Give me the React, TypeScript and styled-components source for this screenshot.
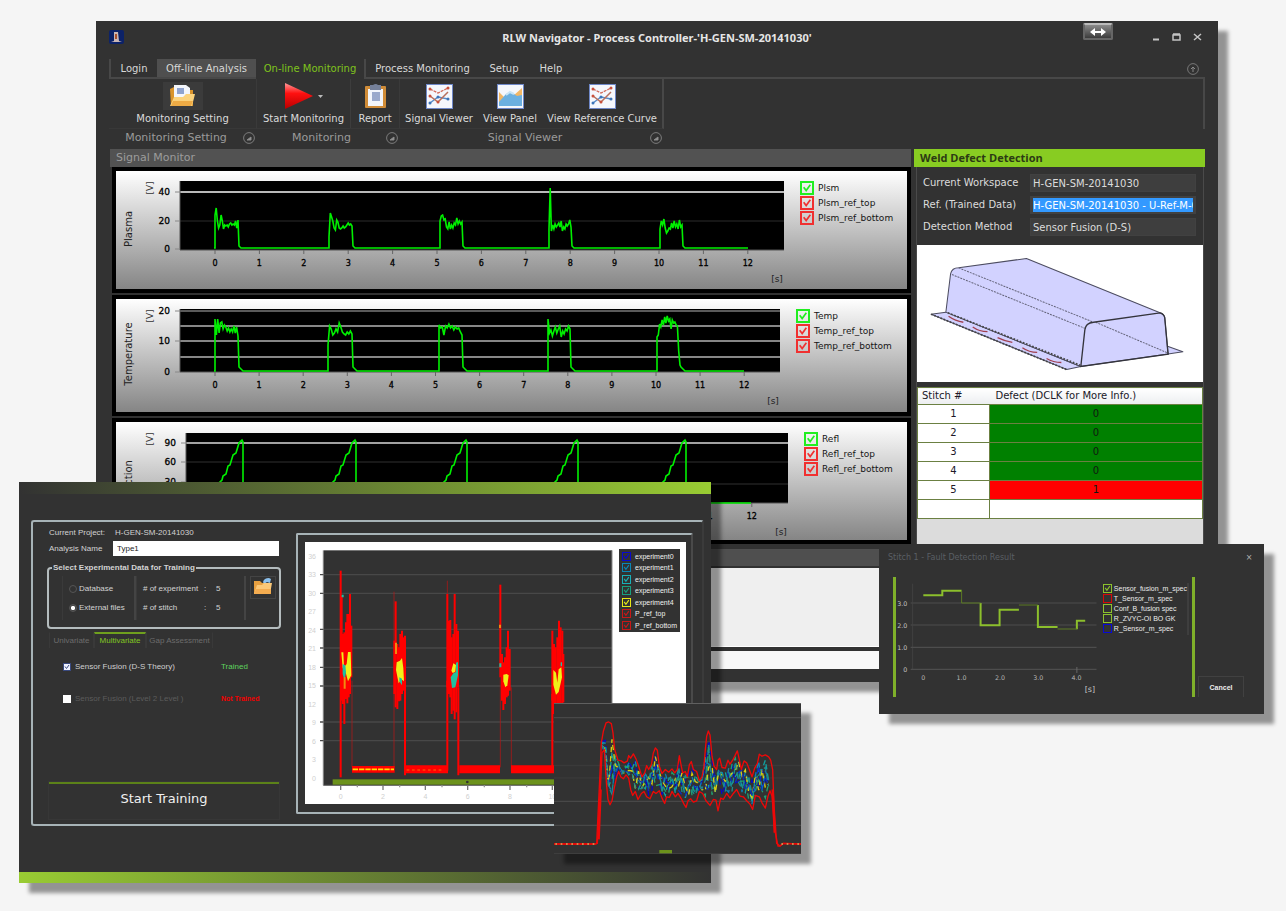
import React from "react";
import styled, { createGlobalStyle, css } from "styled-components";

const GlobalStyle = createGlobalStyle`
  *, *::before, *::after { box-sizing: border-box; }
  body {
    margin: 0;
    background: #f5f5f5;
    font-family: "DejaVu Sans", Verdana, sans-serif;
    font-size: 10px;
    line-height: 12px;
    color: #dedede;
  }
  button, input { font: inherit; color: inherit; }
`;

const dark = "#323232";
const line = "#484848";
const lime = "#88cc22";

/* ---------- shell ---------- */

const Desktop = styled.main`
  position: relative;
  min-height: 100vh;
  padding: 21px 68px 28px 96px;
  overflow: hidden;
`;

const windowChrome = css`
  background: ${dark};
  box-shadow: 10px 10px 4px rgba(0, 0, 0, 0.4);
`;

const MainWindow = styled.section`
  ${windowChrome}
  display: flex;
  flex-direction: column;
  padding: 0 13px 13px 13px;
`;

const FloatingWindow = styled.section<{ $left: number; $top: number; $width: number }>`
  ${windowChrome}
  position: absolute;
  left: ${(p) => p.$left}px;
  top: ${(p) => p.$top}px;
  width: ${(p) => p.$width}px;
`;

/* ---------- title bar ---------- */

const TitleBar = styled.header`
  display: grid;
  grid-template-columns: 1fr auto 1fr;
  height: 38px;
`;

const AppIcon = styled.svg`
  width: 15px;
  height: 14px;
  margin-top: 9px;
`;

const Title = styled.h1`
  margin: 11px 0 0;
  font: bold 11px/12px "Noto Sans", sans-serif;
  color: #e6e6e6;
`;

const TitleActions = styled.div`
  display: flex;
  justify-content: flex-end;
  gap: 8px;
  padding-right: 1px;
`;

const DockButton = styled.button`
  width: 30px;
  height: 17px;
  margin: 2px 28px 0 0;
  padding: 0;
  border: 2px solid #666;
  border-top-color: #bbb;
  border-radius: 2px;
  background: linear-gradient(#8a8a8a, #3c3c3c);
  svg { display: block; width: 26px; height: 12px; }
`;

const WindowButton = styled.button`
  width: 13px;
  height: 13px;
  margin-top: 9px;
  padding: 0;
  border: 0;
  background: none;
  color: #c4c4c4;
  svg { display: block; width: 13px; height: 13px; }
`;

/* ---------- ribbon ---------- */

const TabStrip = styled.nav`
  display: flex;
  height: 20px;
`;

const Tab = styled.button<{ $width: number; $look?: "active" | "hover" | "first" | "edge" }>`
  width: ${(p) => p.$width}px;
  padding: 2px 0 0;
  border: 0 solid ${line};
  border-bottom: 2px solid ${(p) => (p.$look === "active" ? "transparent" : line)};
  border-left-width: ${(p) => (p.$look === "first" || p.$look === "edge" ? 2 : 0)}px;
  background: ${(p) => (p.$look === "hover" ? "#4f4f4f" : "none")};
  color: ${(p) => (p.$look === "active" ? "#7fc31c" : "#d8d8d8")};
  white-space: nowrap;
`;

const TabFiller = styled.div`
  flex: 1;
  display: flex;
  justify-content: flex-end;
  padding: 4px 6px 0 0;
  border-bottom: 2px solid ${line};
`;

const RoundGlyph = styled.svg`
  width: 12px;
  height: 12px;
  flex: none;
`;

const Ribbon = styled.div`
  display: flex;
  height: 70px;
`;

const RibbonGroup = styled.section<{ $width: number }>`
  width: ${(p) => p.$width}px;
  display: flex;
  flex-direction: column;
`;

const RibbonRest = styled.div`
  flex: 1;
  height: 50px;
  border-right: 2px solid ${line};
`;

const Tools = styled.div<{ $edge?: "thin" | "strong" }>`
  display: flex;
  justify-content: center;
  height: 50px;
  border-right: ${(p) => (p.$edge === "strong" ? `2px solid ${line}` : "1px solid #3a3a3a")};
  border-bottom: 1px solid #383838;
`;

const Tool = styled.button<{ $width: number; $divided?: boolean }>`
  width: ${(p) => p.$width}px;
  display: flex;
  flex-direction: column;
  align-items: center;
  gap: 3px;
  padding: 3px 0 0;
  border: 0;
  border-right: ${(p) => (p.$divided ? "1px solid #3d3d3d" : "0")};
  background: none;
  color: #dadada;
  white-space: nowrap;
`;

const ToolIcon = styled.span<{ $lit?: boolean }>`
  display: flex;
  justify-content: center;
  align-items: center;
  min-width: 40px;
  height: 28px;
  background: ${(p) => (p.$lit ? "#3b3b3b" : "none")};
`;

const GroupCaption = styled.div`
  display: flex;
  align-items: center;
  height: 18px;
  padding-right: 2px;
  font-size: 11px;
  color: #9a9a9a;
  span { flex: 1; text-align: center; }
`;

/* ---------- workspace ---------- */

const Workspace = styled.div`
  display: flex;
  gap: 3px;
  padding-left: 1px;
`;

const MonitorColumn = styled.section`
  flex: 1;
  min-width: 0;
`;

const PanelHeader = styled.h2<{ $lime?: boolean }>`
  height: 18px;
  margin: 0;
  padding-left: 6px;
  background: ${(p) => (p.$lime ? lime : "#525252")};
  color: ${(p) => (p.$lime ? "#2c3a14" : "#9c9c9c")};
  font: ${(p) => (p.$lime ? 'bold 11px/18px "Open Sans"' : '11px/18px "DejaVu Sans"')}, sans-serif;
`;

const ChartStack = styled.div`
  display: flex;
  flex-direction: column;
  gap: 2px;
  padding: 0 0 0 2px;
`;

const ChartCard = styled.article<{ $height: number }>`
  display: flex;
  height: ${(p) => p.$height}px;
  border: 4px solid #000;
  background: linear-gradient(#ffffff, #f0f0f0 12%, #858585);
`;

const ChartSvg = styled.svg`
  flex: 1;
  min-width: 0;
  height: 100%;
`;

const Legend = styled.div<{ $width: number }>`
  width: ${(p) => p.$width}px;
  padding-top: 9px;
`;

const LegendItem = styled.label`
  display: flex;
  align-items: center;
  gap: 4px;
  height: 15px;
  font-size: 9px;
  color: #161616;
`;

const tick = (color: string) =>
  `url("data:image/svg+xml,%3Csvg xmlns='http://www.w3.org/2000/svg' viewBox='0 0 12 12'%3E%3Cpath d='M2 5l3 4L10 2' fill='none' stroke='${encodeURIComponent(
    color
  )}' stroke-width='2'/%3E%3C/svg%3E")`;

const Check = styled.input<{ $color: string; $size: number; $fill?: string }>`
  appearance: none;
  flex: none;
  width: ${(p) => p.$size}px;
  height: ${(p) => p.$size}px;
  margin: 0;
  border: ${(p) => (p.$size > 10 ? 2 : 1)}px solid ${(p) => p.$color};
  background-color: ${(p) => p.$fill ?? "transparent"};
  &:checked { background-image: ${(p) => tick(p.$color)}; }
`;

const LogHeader = styled.div`
  height: 17px;
  margin-top: 5px;
  background: #4f4f4f;
`;

const LogArea = styled.div`
  height: 79px;
  margin-top: 2px;
  background: #efefef;
  border-bottom: 1px solid #fff;
`;

const StatusStrip = styled.div`
  height: 18px;
  margin-top: 4px;
  background: #f8f8f8;
`;

/* ---------- detection panel ---------- */

const DetectionColumn = styled.aside`
  width: 291px;
  display: flex;
  flex-direction: column;
`;

const DetectionBody = styled.div`
  flex: 1;
  display: flex;
  flex-direction: column;
  margin: 0 1px 0 2px;
  border: 1px solid #4a4a4a;
  border-top: 0;
`;

const Fields = styled.div`
  display: grid;
  gap: 4px;
  padding: 7px 7px 9px 6px;
`;

const Field = styled.label`
  display: flex;
  align-items: center;
  height: 18px;
  color: #dcdcdc;
  span { width: 107px; }
`;

const FieldInput = styled.input<{ $selected?: boolean }>`
  flex: 1;
  min-width: 0;
  height: 18px;
  border: 1px solid #414141;
  border-width: ${(p) => (p.$selected ? "2px 3px" : "1px")};
  padding: ${(p) => (p.$selected ? "0" : "0 2px")};
  background: ${(p) => (p.$selected ? "#3399ff" : "#3e3e3e")};
  color: ${(p) => (p.$selected ? "#fff" : "#dcdcdc")};
`;

const PartView = styled.svg`
  display: block;
  width: 100%;
  height: 137px;
  background: #fff;
`;

const DefectTable = styled.table`
  width: 100%;
  margin-top: 5px;
  border-collapse: collapse;
  table-layout: fixed;
  border: 1px solid #6b8042;
  background: #fff;
  color: #201828;
  th {
    height: 17px;
    padding: 0 6px;
    text-align: left;
    font-weight: normal;
    background: linear-gradient(#fff, #eceef0);
  }
  th:first-child { width: 72px; padding-left: 4px; }
  td {
    height: 19px;
    padding: 0;
    text-align: center;
    border: 1px solid #6b8042;
  }
`;

const DefectCell = styled.td<{ $state: "ok" | "bad" | "none" }>`
  background: ${(p) => ({ ok: "#008000", bad: "#ff0000", none: "#fff" })[p.$state]};
  color: #101810;
`;

const TableRest = styled.div`
  flex: 1;
  background: #dcdcdc;
`;

/* ---------- training window ---------- */

const Band = styled.div<{ $flip?: boolean }>`
  height: ${(p) => (p.$flip ? 11 : 12)}px;
  background: linear-gradient(${(p) => (p.$flip ? "270deg" : "90deg")}, ${dark}, #99cc33);
`;

const TrainingFrame = styled.div`
  display: flex;
  gap: 17px;
  height: 306px;
  margin: 26px 7px 46px 12px;
  padding: 3px 10px 5px 14px;
  border: 2px solid #a7b3b7;
  border-right-color: #3b3b3b;
  border-radius: 3px;
  font: 8px/10px "Liberation Sans", Arial, sans-serif;
  color: #d2d2d2;
`;

const TrainingForm = styled.form`
  display: flex;
  flex-direction: column;
  width: 232px;
`;

const FormRow = styled.label`
  display: flex;
  align-items: center;
  height: 15px;
  margin-bottom: 1px;
  padding-left: 2px;
  span { width: 64px; }
  output { padding-left: 2px; }
`;

const NameInput = styled.input`
  flex: 1;
  min-width: 0;
  height: 15px;
  padding: 0 4px;
  border: 0;
  background: #fff;
  color: #222;
`;

const DataSet = styled.fieldset`
  display: flex;
  height: 66px;
  margin: 6px 0 0;
  padding: 3px 3px 5px 13px;
  border: 2px solid #b4bcbe;
  border-radius: 4px;
  legend { padding: 0 1px; margin-left: -10px; font-weight: bold; }
`;

const DataColumn = styled.div<{ $width: number }>`
  width: ${(p) => p.$width}px;
  height: 44px;
  display: flex;
  flex-direction: column;
  justify-content: center;
  gap: 9px;
  padding-left: 6px;
  border: 1px solid #3a3a3a;
  border-width: 0 2px 0 1px;
  border-right-color: #444;
`;

const DataLine = styled.div`
  display: grid;
  grid-template-columns: 61px 12px 10px;
`;

const Radio = styled.label`
  display: flex;
  align-items: center;
  gap: 2px;
  white-space: nowrap;
  input {
    appearance: none;
    width: 8px;
    height: 8px;
    margin: 0;
    border: 1px solid #555;
    border-radius: 50%;
  }
  input:checked { background: radial-gradient(#fff 45%, #444 55%); }
`;

const OpenButton = styled.button`
  width: 26px;
  height: 23px;
  margin-left: 4px;
  padding: 0;
  border: 1px solid #444;
  background: ${dark};
`;

const MethodTabs = styled.div`
  display: flex;
  height: 16px;
  margin-top: 3px;
  padding-left: 2px;
`;

const MethodTab = styled.button<{ $on?: boolean; $width: number }>`
  width: ${(p) => p.$width}px;
  padding: 0;
  border: 1px solid #393939;
  border-top: ${(p) => (p.$on ? "2px solid #6fa01e" : "1px solid transparent")};
  border-bottom: 0;
  background: none;
  color: ${(p) => (p.$on ? "#83c722" : "#6c6c6c")};
`;

const Methods = styled.div`
  flex: 1;
  padding: 14px 0 0 16px;
`;

const Method = styled.div<{ $off?: boolean }>`
  display: flex;
  justify-content: space-between;
  height: 32px;
  padding-right: 22px;
  label {
    display: flex;
    align-items: center;
    gap: 4px;
    height: 10px;
    color: ${(p) => (p.$off ? "#5c5c5c" : "#cfcfcf")};
  }
`;

const Status = styled.strong<{ $ok?: boolean }>`
  width: 36px;
  font-weight: ${(p) => (p.$ok ? "normal" : "bold")};
  font-size: ${(p) => (p.$ok ? 8 : 7)}px;
  white-space: nowrap;
  color: ${(p) => (p.$ok ? "#5fd45f" : "#f00000")};
`;

const StartButton = styled.button`
  height: 37px;
  margin: 0 0 0 2px;
  padding: 0 0 5px;
  border: 0;
  border-top: 2px solid #5c8219;
  outline: 1px solid #373737;
  background: none;
  color: #f0f0f0;
  font: 13px/16px "DejaVu Sans", sans-serif;
`;

const PlotFrame = styled.div`
  flex: 1;
  height: 281px;
  margin-top: 8px;
  padding: 7px 5px 7px 7px;
  border: 2px solid #a7b3b7;
  border-right-color: #4a4a4a;
  border-radius: 2px;
`;

const PlotSheet = styled.div`
  display: flex;
  gap: 4px;
  height: 262px;
  background: #fff;
`;

const PlotSvg = styled.svg`
  flex: 1;
  min-width: 0;
  height: 262px;
`;

const SampleLegend = styled.div`
  width: 61px;
  height: 83px;
  margin: 7px 6px 0 0;
  padding: 1px 3px;
  background: ${dark};
  font: 7px/9px "Liberation Sans", Arial, sans-serif;
  color: #f0f0f0;
  label {
    display: flex;
    align-items: center;
    gap: 4px;
    height: 12px;
    white-space: nowrap;
  }
  label:nth-child(2n) { height: 11px; }
`;

/* ---------- result window ---------- */

const ResultHeader = styled.header`
  display: flex;
  justify-content: space-between;
  height: 33px;
  padding: 9px 11px 0 9px;
  font-size: 8px;
  line-height: 10px;
  color: #5a5f64;
`;

const CloseButton = styled.button`
  width: 8px;
  height: 10px;
  padding: 0;
  border: 0;
  background: none;
  color: #b5b5b5;
`;

const ResultBody = styled.div`
  display: flex;
  align-items: flex-end;
  height: 137px;
  padding: 0 20px 17px 14px;
`;

const ResultPlot = styled.div`
  display: flex;
  width: 302px;
  height: 120px;
  border: 3px solid #7fb02a;
  border-width: 0 3px;
`;

const ResultLegend = styled.div`
  flex: 1;
  height: 52px;
  margin: 6px 3px 0 0;
  border-right: 2px solid #3e3e3e;
  font: 7px/9px "Liberation Sans", Arial, sans-serif;
  color: #ececec;
  label {
    display: flex;
    align-items: center;
    gap: 2px;
    height: 10px;
    white-space: nowrap;
  }
`;

const CancelButton = styled.button`
  width: 46px;
  height: 21px;
  margin-left: 3px;
  padding: 0;
  border: 1px solid #414141;
  border-bottom: 0;
  background: none;
  color: #ededed;
  font: bold 7px/9px "Liberation Sans", Arial, sans-serif;
`;

const ZoomSvg = styled.svg`
  display: block;
  width: 100%;
  height: 151px;
`;

/* ---------- data ---------- */

type Pulse = { x: number; w: number; tops: number[] };

const pulsePath = (start: number, end: number, base: number, pulses: Pulse[], tail: number) => {
  let d = `M${start} ${base}`;
  pulses.forEach(({ x, w, tops }) => {
    d += `L${x} ${base}`;
    tops.forEach((y, i) => (d += `L${(x + (i * w) / (tops.length - 1)).toFixed(1)} ${y}`));
    d += `L${x + w + 1} ${base - tail}L${x + w + 1 + tail} ${base}`;
  });
  return d + `L${end} ${base}`;
};

const plasma: Pulse[] = [
  { x: 99, w: 23, tops: [44, 37, 50, 57, 54, 44, 50, 58, 54, 55, 54, 56, 53, 52, 54, 53, 54, 50, 57, 49] },
  { x: 213, w: 23, tops: [66, 42, 46, 50, 57, 59, 49, 51, 57, 58, 57, 55, 57, 56, 54, 52, 54, 53, 55] },
  { x: 324, w: 22, tops: [50, 45, 44, 49, 48, 56, 58, 51, 58, 54, 57, 52, 54, 47, 53, 50, 53, 51] },
  { x: 433, w: 22, tops: [58, 17, 60, 54, 58, 53, 56, 54, 52, 56, 50, 60, 56, 58, 53, 55, 53, 49, 56] },
  { x: 544, w: 22, tops: [58, 50, 54, 48, 57, 62, 60, 57, 58, 52, 57, 50, 56, 53, 58, 49, 56, 54] },
];

const temperature: Pulse[] = [
  { x: 99, w: 23, tops: [20, 36, 20, 34, 24, 23, 30, 26, 28, 32, 29, 33, 30, 33, 27, 34, 28, 37] },
  { x: 212, w: 24, tops: [46, 27, 30, 36, 34, 30, 33, 24, 28, 33, 35, 36, 33, 35, 32, 35] },
  { x: 323, w: 23, tops: [26, 29, 28, 36, 27, 29, 25, 29, 27, 31, 28, 30, 29, 33, 36] },
  { x: 432, w: 22, tops: [20, 34, 31, 37, 32, 28, 34, 30, 27, 38, 32, 35, 30, 32, 27, 30] },
  { x: 541, w: 23, tops: [38, 36, 25, 28, 21, 26, 18, 24, 17, 22, 20, 30, 21, 24, 23, 26, 27, 52, 66] },
];

const reflectionPath = [103, 216, 327, 438, 546].reduce(
  (d, x) =>
    d +
    `L${x - 5} 81L${x} 61l3 -3l1 -4l3 -2l2 -8l2 -1l3 -10l3 -2l3 -10l3 -3l1 2V81`,
  "M98 81"
) + "L635 81";

type ChartSpec = {
  name: string;
  nameY: number;
  height: number;
  plot: [number, number, number, number];
  grid: { y: number; color: string; w?: number }[];
  yLabels: [string, number][];
  unitY: number;
  x0: number;
  step: number;
  path: string;
  legendWidth: number;
  legend: string[];
};

const charts: ChartSpec[] = [
  {
    name: "Plasma", nameY: 58, height: 126, plot: [64, 10, 604, 69],
    grid: [{ y: 21, color: "#b9b9b9", w: 2 }, { y: 50, color: "#2c2c2c" }],
    yLabels: [["40", 21], ["20", 50], ["0", 78]], unitY: 17,
    x0: 99, step: 44.4, path: pulsePath(98, 632, 77, plasma, 2),
    legendWidth: 107, legend: ["Plsm", "Plsm_ref_top", "Plsm_ref_bottom"],
  },
  {
    name: "Temperature", nameY: 55, height: 121, plot: [64, 10, 600, 63],
    grid: [12, 27, 42, 58].map((y) => ({ y, color: y === 12 ? "#5a5a5a" : "#868686", w: 2 })),
    yLabels: [["20", 12], ["10", 42], ["0", 73]], unitY: 17,
    x0: 99, step: 44.1, path: pulsePath(98, 628, 72, temperature, 4),
    legendWidth: 111, legend: ["Temp", "Temp_ref_top", "Temp_ref_bottom"],
  },
  {
    name: "Reflection", nameY: 63, height: 126, plot: [70, 11, 602, 70],
    grid: [{ y: 21, color: "#a2a2a2", w: 2 }, { y: 40, color: "#303030" }, { y: 62, color: "#303030" }],
    yLabels: [["90", 21], ["60", 40], ["30", 60], ["0", 81]], unitY: 17,
    x0: 103, step: 44.4, path: reflectionPath,
    legendWidth: 103, legend: ["Refl", "Refl_ref_top", "Refl_ref_bottom"],
  },
];

const makeRandom = (seed: number) => () => {
  seed = (seed * 16807) % 2147483647;
  return seed / 2147483647;
};

/* Upper and lower bounds of the welding signal, in drawing units. */
const upper: [number, number][] = [
  [140, 462], [150, 250], [154, 160], [160, 125], [168, 100], [176, 97], [184, 102], [189, 130], [194, 180], [204, 212],
  [214, 214], [222, 220], [232, 215], [236, 198], [242, 206], [250, 193], [258, 208], [266, 230], [276, 262], [284, 250],
  [290, 228], [296, 240], [304, 226], [310, 190], [316, 175], [322, 182], [328, 230], [336, 252], [346, 240], [356, 248],
  [366, 238], [374, 250], [382, 240], [388, 198], [392, 220], [398, 250], [406, 246], [412, 262], [418, 226], [424, 216],
  [430, 240], [440, 246], [448, 274], [456, 262], [462, 230], [466, 180], [470, 140], [475, 124], [480, 136], [486, 200],
  [492, 230], [500, 240], [504, 212], [509, 206], [516, 234], [526, 236], [534, 212], [540, 224], [548, 212], [556, 196],
  [562, 184], [568, 210], [574, 240], [582, 214], [590, 220], [598, 240], [606, 262], [614, 236], [622, 222], [628, 194],
  [636, 200], [646, 196], [656, 202], [662, 212], [668, 240], [672, 350], [680, 462],
];
const lower: [number, number][] = [
  [142, 462], [150, 320], [156, 190], [163, 180], [166, 230], [170, 290], [174, 330], [180, 346], [186, 334], [192, 300],
  [200, 262], [206, 246], [212, 262], [220, 268], [228, 256], [236, 266], [242, 300], [248, 318], [256, 306], [264, 330],
  [274, 312], [282, 306], [290, 322], [300, 328], [310, 306], [318, 312], [328, 304], [336, 326], [344, 342], [350, 322],
  [358, 324], [366, 306], [376, 322], [384, 312], [394, 328], [402, 344], [408, 354], [414, 334], [422, 328], [430, 338],
  [440, 334], [448, 306], [458, 312], [468, 334], [480, 348], [490, 330], [498, 332], [504, 364], [512, 326], [520, 330],
  [530, 312], [540, 326], [550, 312], [560, 300], [570, 320], [580, 322], [590, 334], [600, 344], [608, 360], [616, 318],
  [628, 322], [636, 340], [646, 356], [654, 320], [660, 304], [666, 320], [674, 420], [684, 470],
];
const levelAt = (pts: [number, number][], x: number) => {
  const i = Math.max(1, pts.findIndex((p) => p[0] >= x));
  const [a, b] = [pts[i - 1], pts[i]];
  return a[1] + ((b[1] - a[1]) * (x - a[0])) / (b[0] - a[0]);
};
const trace = (pts: [number, number][]) => "M12 464L136 464L" + pts.map((p) => p.join(" ")).join("L") + "L690 470L700 462L753 464";
const sampleTrace = (seed: number) => {
  const rnd = makeRandom(seed);
  let d = "";
  for (let x = 156; x < 666; x += 10) {
    const t = levelAt(upper, x) + 8;
    const b = levelAt(lower, x) - 8;
    d += `${d ? "L" : "M"}${x} ${(t + (b - t) * rnd()).toFixed(0)}`;
  }
  return d;
};
const samples = ["#0808c8", "#0a80b8", "#10a0a0", "#20a070", "#d8d010", "#0a30c0", "#1c8c8c"].map((color, i) => ({
  color,
  d: sampleTrace(991 + i * 7717),
}));

/* Envelope of each weld in the training plot: x offset, top, bottom. */
const welds: [number, number, number][][] = [
  [[152, 270, 890], [155, 345, 660], [159, 460, 670], [163, 455, 730], [168, 425, 655], [172, 400, 668], [176, 400, 650], [180, 340, 640], [184, 435, 590]],
  [[313, 480, 640], [317, 362, 680], [322, 490, 685], [327, 500, 662], [331, 460, 660], [336, 450, 640], [340, 470, 630], [345, 465, 600]],
  [[472, 340, 620], [477, 420, 640], [481, 418, 650], [485, 470, 700], [490, 460, 690], [494, 340, 716], [499, 430, 695], [504, 450, 620]],
  [[631, 312, 590], [636, 520, 660], [640, 545, 688], [645, 530, 670], [650, 500, 650], [654, 450, 645], [659, 505, 630]],
  [[787, 450, 660], [792, 490, 700], [797, 500, 690], [802, 470, 680], [807, 420, 690], [812, 440, 680], [817, 450, 670], [820, 520, 665]],
];

/* ---------- pieces ---------- */

const SignalChart = ({ c }: { c: ChartSpec }) => {
  const [px, py, pw, ph] = c.plot;
  return (
    <ChartCard $height={c.height}>
      <ChartSvg viewBox={`0 0 ${790 - c.legendWidth} ${c.height - 8}`} preserveAspectRatio="xMinYMin meet">
        <rect x={px} y={py} width={pw} height={ph} fill="#000" />
        {c.grid.map((g) => (
          <path key={g.y} d={`M${px} ${g.y}H${px + pw}`} stroke={g.color} strokeWidth={g.w ?? 1} />
        ))}
        <path d={`M${px} ${py}V${py + ph}H${px + pw}`} fill="none" stroke="#555" />
        {c.yLabels.map(([t, y]) => (
          <g key={t}>
            <path d={`M${px - 5} ${y}H${px}`} stroke="#888" />
            <text x={px - 10} y={y + 3} textAnchor="end" fontSize="9" stroke="#000" strokeWidth="0.3">{t}</text>
          </g>
        ))}
        {Array.from({ length: 13 }, (_, i) => {
          const x = c.x0 + i * c.step;
          return (
            <g key={i}>
              <path d={`M${x} ${py + ph}v4`} stroke="#666" />
              <text x={x} y={py + ph + 16} textAnchor="middle" fontSize="8" stroke="#000" strokeWidth="0.3">{i}</text>
            </g>
          );
        })}
        <path d={c.path} fill="none" stroke="#00f000" strokeWidth="1.6" />
        <text x={px + pw - 7} y={py + ph + 32} textAnchor="middle" fontSize="9" fill="#222">[s]</text>
        <text transform={`translate(37 ${c.unitY}) rotate(-90)`} textAnchor="middle" fontSize="9" fill="#333">[V]</text>
        <text transform={`translate(16 ${c.nameY}) rotate(-90)`} textAnchor="middle" fontSize="10" fill="#222">{c.name}</text>
      </ChartSvg>
      <Legend $width={c.legendWidth}>
        {c.legend.map((l, i) => (
          <LegendItem key={l}>
            <Check type="checkbox" defaultChecked $size={14} $color={i ? "#f03030" : "#20ee20"} />
            {l}
          </LegendItem>
        ))}
      </Legend>
    </ChartCard>
  );
};

const FolderIcon = ({ size }: { size: number }) => (
  <svg width={size} height={size - 3} viewBox="0 0 27 24" aria-hidden="true">
    <path d="M1 5l4-2h5l2 3h12v16H2z" fill="#d9942c" />
    <path d="M5 1h12l4 3v13H5z" fill="#f4f6fb" />
    <path d="M8 4h7v6H8z" fill="#8fa3cf" />
    <path d="M1 22l4-9h9l3-3h9l-3 12z" fill="#fbd27c" />
    <path d="M2 22l2-5h20l-2 5z" fill="#eeab45" />
  </svg>
);

const OpenFolderIcon = () => (
  <svg width="20" height="18" viewBox="0 0 20 18" aria-hidden="true">
    <path d="M1 4h6l2 2h9v11H1z" fill="#e8a040" />
    <path d="M10 5q1-4 6-4l2 1-1 4-3-1-3 2z" fill="#8cc0ec" />
    <path d="M1 17l3-9h5l2-2h8l-2 11z" fill="#fbc878" />
    <path d="M1 17l2-5h15l-1 5z" fill="#f4ac50" />
  </svg>
);

const LinesIcon = () => (
  <svg width="27" height="25" viewBox="0 0 27 25" aria-hidden="true">
    <rect x="0.5" y="0.5" width="26" height="24" fill="#f5f7fc" stroke="#6f88c8" />
    <path d="M4 5l8 4 10-5" fill="none" stroke="#d06a5a" strokeWidth="1.3" strokeDasharray="3 1" />
    <path d="M4 19l8-6 10 2" fill="none" stroke="#5a8cc8" strokeWidth="1.5" />
    <path d="M4 12l8 6 10-10" fill="none" stroke="#b8705c" strokeWidth="1.5" />
    <g fill="#c8503c"><circle cx="4" cy="5" r="1.5" /><circle cx="22" cy="4" r="1.5" /><circle cx="4" cy="12" r="1.5" /><circle cx="12" cy="18" r="1.5" /></g>
    <g fill="#3c74b8"><circle cx="4" cy="19" r="1.5" /><circle cx="12" cy="13" r="1.5" /><circle cx="22" cy="15" r="1.5" /></g>
  </svg>
);

const AreaIcon = () => (
  <svg width="27" height="25" viewBox="0 0 27 25" aria-hidden="true">
    <rect x="0.5" y="0.5" width="26" height="24" fill="#f5f7fc" stroke="#6f88c8" />
    <path d="M2 8l5 5 9-1 9-8v18H2z" fill="#f2b766" />
    <path d="M2 18l7-8 5-2 6 4 5-1v11H2z" fill="#6cb0e0" />
    <path d="M9 11l4-3 4 2" fill="none" stroke="#c8e4f6" strokeWidth="2" />
  </svg>
);

const ClipboardIcon = () => (
  <svg width="21" height="25" viewBox="0 0 21 25" aria-hidden="true">
    <rect x="0" y="2" width="21" height="22" rx="1" fill="#d08c38" />
    <rect x="3" y="5" width="15" height="17" fill="#f2f5fb" />
    <path d="M5 1h3q3-2 5 0h3v5H5z" fill="#75809a" />
    <rect x="7" y="8" width="8" height="9" fill="#9aa9cc" />
  </svg>
);

const PlayIcon = () => (
  <svg width="38" height="26" viewBox="0 0 38 26" aria-hidden="true">
    <defs>
      <linearGradient id="play" x2="0" y2="1">
        <stop stopColor="#ff9a9a" /><stop offset="0.4" stopColor="#ff1010" /><stop offset="1" stopColor="#b80000" />
      </linearGradient>
    </defs>
    <path d="M0 0L28 13L0 26z" fill="url(#play)" />
    <path d="M33 12h5l-2.5 3z" fill="#bbb" />
  </svg>
);

const Corner = () => (
  <RoundGlyph viewBox="0 0 12 12" aria-hidden="true">
    <circle cx="6" cy="6" r="5.4" fill="none" stroke="#7c7c7c" />
    <path d="M4 8h4V5z" fill="#9a9a9a" stroke="#8a8a8a" />
  </RoundGlyph>
);

const defects: [string, string][] = [["1", "0"], ["2", "0"], ["3", "0"], ["4", "0"], ["5", "1"], ["", ""]];

const sampleLegend: [string, string][] = [
  ["experiment0", "#0808d0"], ["experiment1", "#0a88b8"], ["experiment2", "#18b0b8"], ["experiment3", "#18a080"],
  ["experiment4", "#e8e818"], ["P_ref_top", "#c81818"], ["P_ref_bottom", "#c81818"],
];

const resultLegend: [string, string][] = [
  ["Sensor_fusion_m_spec", "#8cc22c"], ["T_Sensor_m_spec", "#d80808"], ["Conf_B_fusion spec", "#8cc22c"],
  ["R_ZVYC-OI BO GK", "#8cc22c"], ["R_Sensor_m_spec", "#0808d8"],
];

const Part = () => (
  <PartView viewBox="54 32 852 408" role="img" aria-label="Welded part">
    <g fill="#d2d2ff" stroke="#4c4c60" strokeWidth="3" strokeLinejoin="round">
      <path d="M96 238L140 232L542 394L500 403Z" />
      <path d="M796 332L846 350L802 357Z" />
      <path d="M140 232L154 118Q158 100 178 100L380 72L778 234Q790 238 792 248L802 357L542 394Z" />
    </g>
    <g fill="none" stroke="#66667c" strokeWidth="3">
      <path d="M178 100L580 262M158 120L554 280M586 262L802 354" strokeDasharray="6 3" />
      <path d="M96 238L500 403M146 234L540 390" stroke="#444" strokeWidth="5" strokeDasharray="5 5" />
      <path d="M542 394L554 285Q556 264 580 262L778 234Q790 238 792 248L802 357Z" stroke="#34343c" strokeWidth="4" />
    </g>
    <path d="M148 244q20 14 44 18M220 276q20 14 44 14M294 308q20 10 44 14M368 338q20 14 44 14M440 370q20 12 44 12" fill="none" stroke="#a04050" strokeWidth="4" />
  </PartView>
);

const TrainingPlot = () => (
  <PlotSvg viewBox="45 184 930 786" preserveAspectRatio="xMinYMin meet">
    <rect x="102" y="209" width="864" height="705" fill={dark} />
    {[282, 338, 446, 502, 560, 616, 724, 780].map((y) => (
      <path key={y} d={`M90 ${y}H966`} stroke="#484848" strokeWidth="4" />
    ))}
    <path d="M100 209V914H966" fill="none" stroke="#666" strokeWidth="3" />
    <path d="M966 209V914" stroke="#888" strokeWidth="3" />
    {Array.from({ length: 13 }, (_, i) => (
      <text key={i} x="78" y={900 - i * 55.5} textAnchor="end" fontSize="21" fill="#d0d0d0">{i * 3}</text>
    ))}
    {Array.from({ length: 7 }, (_, i) => (
      <g key={i}>
        <path d={`M${152 + i * 127} 914v14`} stroke="#777" strokeWidth="4" />
        <path d={`M${202 + i * 127} 914v6`} stroke="#999" strokeWidth="4" />
        <text x={152 + i * 127} y="954" textAnchor="middle" fontSize="21" fill="#d0d0d0">{i * 2}</text>
      </g>
    ))}
    <g stroke="#b01818" strokeWidth="3" opacity="0.75">
      <path d="M186 600V860M312 333V860M472 300V400M631 590V860M664 620V870" />
    </g>
    <g stroke="#ff0000" strokeWidth="6">
      {welds.flat().map(([x, a, b]) => <path key={x} d={`M${x} ${a}V${b}`} />)}
      <path d="M345 600V884M472 600V870M505 620V884M787 640V870" />
    </g>
    <g fill="#ff0000">
      <path d="M186 856H314V876H186zM347 854H474V878H347zM508 854H630V878H508zM663 854H792V878H663z" />
    </g>
    <path d="M188 866H312" stroke="#ffe000" strokeWidth="5" strokeDasharray="16 3" />
    <path d="M350 868H460" stroke="#ff6a00" strokeWidth="3" strokeDasharray="8 8" />
    <g fill="#f0f018">
      <path d="M154 515h6l2 45l8-10l4-36l8 0l2 70l-10 18l-8-30l-8-10z" />
      <path d="M320 545l10-5l6-8l4 30l2 40l-8-6l-8 12l-8-40z" />
      <path d="M484 570l6-22l8 5l-2 20l-8 4z" />
      <path d="M640 582l10-2l6 4l-4 30l-6 6l-6-18z" />
      <path d="M790 568l8 8l4 30l4-40l8-6l2 30l-10 44l-8 8l-8-30z" />
    </g>
    <g fill="#20c0a0">
      <path d="M158 550l8 4l2 20l-4 26l-6-20zM482 590l8-12l8-4l0-28l6-2l0 40l-8 36l-10 2z" />
      <path d="M328 590l8 4v20l-8-12zM628 548h6v12h-6zM155 342h6v8h-6zM812 545h4v12h-4z" />
    </g>
    <path d="M164 590v34M318 486v34M630 432v10" stroke="#f08a10" strokeWidth="6" />
    <rect x="128" y="896" width="838" height="16" fill="#6c921c" />
    <circle cx="532" cy="904" r="4" fill={dark} />
  </PlotSvg>
);

const ZoomPlot = () => (
  <ZoomSvg viewBox="12 40 741 454" preserveAspectRatio="none" role="img" aria-label="Enlarged weld signal">
    <path d="M12 41H753" stroke="#6a6a6a" strokeWidth="3" />
    {[84, 157, 228, 265, 336, 408].map((y, i) => (
      <path key={y} d={`M12 ${y}H753`} stroke={i === 2 || i === 3 ? "#3a3a3a" : "#484848"} strokeWidth="4" />
    ))}
    {samples.map((s, i) => (
      <path key={s.d} d={s.d} fill="none" stroke={s.color} strokeWidth="4" strokeDasharray="16 12" strokeDashoffset={i * 5} />
    ))}
    <g fill="none" stroke="#ee0808" strokeWidth="4" strokeLinejoin="round">
      <path d={trace(upper)} />
      <path d={trace(lower)} />
      <path d="M146 450L152 300M668 300L674 430" strokeWidth="7" />
    </g>
    <path d="M16 464H136M694 464H753" stroke="#c8b060" strokeWidth="4" strokeDasharray="5 11" />
    <rect x="328" y="482" width="38" height="11" fill="#6c921c" />
    <path d="M12 493H753" stroke="#484848" strokeWidth="2" />
  </ZoomSvg>
);

const ResultSvg = () => (
  <svg width="207" height="120" viewBox="78 140 621 360" role="img" aria-label="Fault detection curve">
    <path d="M128 160V418" stroke="#404040" strokeWidth="3" />
    {[218, 284, 351, 417].map((y, i) => (
      <path key={y} d={`M122 ${y}H680`} stroke={i > 1 ? "#4d4d4d" : "#444"} strokeWidth="4" />
    ))}
    <path d="M621 410V428" stroke="#666" strokeWidth="3" />
    {["3.0", "2.0", "1.0", "0"].map((t, i) => (
      <text key={t} x="112" y={226 + i * 66} textAnchor="end" fontSize="19" fill="#c4c4c4">{t}</text>
    ))}
    {["0", "1.0", "2.0", "3.0", "4.0"].map((t, i) => (
      <text key={t} x={160 + i * 115} y="448" textAnchor="middle" fontSize="19" fill="#b4b4b4">{t}</text>
    ))}
    <text x="660" y="484" textAnchor="middle" fontSize="24" fill="#c4c4c4">[s]</text>
    <path d="M160 195H217V181H275M332 218V285H389V238H447M504 224V290H563M621 297V271H646" fill="none" stroke="#8cbf2c" strokeWidth="6" />
    <path d="M275 181V218H332M447 224H504M563 296H621" fill="none" stroke="#5c7a24" strokeWidth="3" />
  </svg>
);

export default function App() {
  return (
    <>
      <GlobalStyle />
      <Desktop>
        <MainWindow>
          <TitleBar>
            <AppIcon viewBox="0 0 15 14" aria-hidden="true">
              <rect width="15" height="14" rx="2" fill="#0c2268" />
              <path d="M5 2h4l1 9 3 1H2l3-1z" fill="#c9b6b4" />
              <path d="M6 4h2v5H6z" fill="#a8502c" />
            </AppIcon>
            <Title>RLW Navigator - Process Controller-'H-GEN-SM-20141030'</Title>
            <TitleActions>
              <DockButton aria-label="Resize">
                <svg viewBox="0 0 26 12"><path d="M5 6l5-4v3h6V2l5 4-5 4V7h-6v3z" fill="#fff" /></svg>
              </DockButton>
              <WindowButton aria-label="Minimize">
                <svg viewBox="0 0 13 13"><path d="M4 9.5h6" stroke="currentColor" strokeWidth="2" /></svg>
              </WindowButton>
              <WindowButton aria-label="Maximize">
                <svg viewBox="0 0 13 13"><path d="M3 5h7v5H3zM3 4h7" fill="none" stroke="currentColor" strokeWidth="1.5" /></svg>
              </WindowButton>
              <WindowButton aria-label="Close">
                <svg viewBox="0 0 13 13"><path d="M3 4l7 6M10 4l-7 6" stroke="currentColor" strokeWidth="1.5" /></svg>
              </WindowButton>
            </TitleActions>
          </TitleBar>

          <TabStrip>
            <Tab $width={48} $look="first">Login</Tab>
            <Tab $width={99} $look="hover">Off-line Analysis</Tab>
            <Tab $width={108} $look="active">On-line Monitoring</Tab>
            <Tab $width={115} $look="edge">Process Monitoring</Tab>
            <Tab $width={50}>Setup</Tab>
            <Tab $width={44}>Help</Tab>
            <TabFiller>
              <RoundGlyph viewBox="0 0 12 12" aria-hidden="true">
                <circle cx="6" cy="6" r="5.4" fill="none" stroke="#777" />
                <path d="M6 9V4M4 6l2-2 2 2" fill="none" stroke="#888" />
              </RoundGlyph>
            </TabFiller>
          </TabStrip>

          <Ribbon>
            <RibbonGroup $width={148}>
              <Tools $edge="thin">
                <Tool $width={140}><ToolIcon $lit><FolderIcon size={27} /></ToolIcon>Monitoring Setting</Tool>
              </Tools>
              <GroupCaption><span>Monitoring Setting</span><Corner /></GroupCaption>
            </RibbonGroup>
            <RibbonGroup $width={143}>
              <Tools>
                <Tool $width={94} $divided><ToolIcon><PlayIcon /></ToolIcon>Start Monitoring</Tool>
                <Tool $width={48}><ToolIcon><ClipboardIcon /></ToolIcon>Report</Tool>
              </Tools>
              <GroupCaption><span>Monitoring</span><Corner /></GroupCaption>
            </RibbonGroup>
            <RibbonGroup $width={264}>
              <Tools $edge="strong">
                <Tool $width={76}><ToolIcon><LinesIcon /></ToolIcon>Signal Viewer</Tool>
                <Tool $width={66}><ToolIcon><AreaIcon /></ToolIcon>View Panel</Tool>
                <Tool $width={118}><ToolIcon><LinesIcon /></ToolIcon>View Reference Curve</Tool>
              </Tools>
              <GroupCaption><span>Signal Viewer</span><Corner /></GroupCaption>
            </RibbonGroup>
            <RibbonRest />
          </Ribbon>

          <Workspace>
            <MonitorColumn>
              <PanelHeader>Signal Monitor</PanelHeader>
              <ChartStack>
                {charts.map((c) => <SignalChart key={c.name} c={c} />)}
              </ChartStack>
              <LogHeader />
              <LogArea />
              <StatusStrip />
            </MonitorColumn>

            <DetectionColumn>
              <PanelHeader $lime>Weld Defect Detection</PanelHeader>
              <DetectionBody>
                <Fields>
                  <Field><span>Current Workspace</span><FieldInput readOnly value="H-GEN-SM-20141030" /></Field>
                  <Field><span>Ref. (Trained Data)</span><FieldInput readOnly $selected value="H-GEN-SM-20141030 - U-Ref-M-0" /></Field>
                  <Field><span>Detection Method</span><FieldInput readOnly value="Sensor Fusion (D-S)" /></Field>
                </Fields>
                <Part />
                <DefectTable>
                  <thead><tr><th>Stitch #</th><th>Defect (DCLK for More Info.)</th></tr></thead>
                  <tbody>
                    {defects.map(([n, v]) => (
                      <tr key={n}>
                        <td>{n}</td>
                        <DefectCell $state={v === "" ? "none" : v === "0" ? "ok" : "bad"}>{v}</DefectCell>
                      </tr>
                    ))}
                  </tbody>
                </DefectTable>
                <TableRest />
              </DetectionBody>
            </DetectionColumn>
          </Workspace>
        </MainWindow>

        <FloatingWindow $left={19} $top={482} $width={692}>
          <Band />
          <TrainingFrame>
            <TrainingForm onSubmit={(e) => e.preventDefault()}>
              <FormRow as="div"><span>Current Project:</span><output>H-GEN-SM-20141030</output></FormRow>
              <FormRow><span>Analysis Name</span><NameInput defaultValue="Type1" /></FormRow>
              <DataSet>
                <legend>Select Experimental Data for Training</legend>
                <DataColumn $width={74}>
                  <Radio><input type="radio" name="source" />Database</Radio>
                  <Radio><input type="radio" name="source" defaultChecked />External files</Radio>
                </DataColumn>
                <DataColumn $width={110}>
                  <DataLine><span># of experiment</span><span>:</span><span>5</span></DataLine>
                  <DataLine><span># of stitch</span><span>:</span><span>5</span></DataLine>
                </DataColumn>
                <OpenButton type="button" aria-label="Open folder"><OpenFolderIcon /></OpenButton>
              </DataSet>
              <MethodTabs>
                <MethodTab type="button" $width={45}>Univariate</MethodTab>
                <MethodTab type="button" $width={52} $on>Multivariate</MethodTab>
                <MethodTab type="button" $width={67}>Gap Assessment</MethodTab>
              </MethodTabs>
              <Methods>
                <Method>
                  <label><Check type="checkbox" defaultChecked $size={8} $color="#3a4a80" $fill="#f0f2ff" />Sensor Fusion (D-S Theory)</label>
                  <Status $ok>Trained</Status>
                </Method>
                <Method $off>
                  <label><Check type="checkbox" $size={8} $color="#fff" $fill="#fff" />Sensor Fusion (Level 2 Level )</label>
                  <Status>Not Trained</Status>
                </Method>
              </Methods>
              <StartButton type="submit">Start Training</StartButton>
            </TrainingForm>
            <PlotFrame>
              <PlotSheet>
                <TrainingPlot />
                <SampleLegend>
                  {sampleLegend.map(([t, color]) => (
                    <label key={t}><Check type="checkbox" defaultChecked $size={9} $color={color} />{t}</label>
                  ))}
                </SampleLegend>
              </PlotSheet>
            </PlotFrame>
          </TrainingFrame>
          <Band $flip />
        </FloatingWindow>

        <FloatingWindow $left={554} $top={703} $width={247}>
          <ZoomPlot />
        </FloatingWindow>

        <FloatingWindow $left={879} $top={544} $width={385}>
          <ResultHeader>
            <span>Stitch 1 - Fault Detection Result</span>
            <CloseButton aria-label="Close">×</CloseButton>
          </ResultHeader>
          <ResultBody>
            <ResultPlot>
              <ResultSvg />
              <ResultLegend>
                {resultLegend.map(([t, color], i) => (
                  <label key={t}><Check type="checkbox" defaultChecked={i === 0} $size={9} $color={color} />{t}</label>
                ))}
              </ResultLegend>
            </ResultPlot>
            <CancelButton>Cancel</CancelButton>
          </ResultBody>
        </FloatingWindow>
      </Desktop>
    </>
  );
}
